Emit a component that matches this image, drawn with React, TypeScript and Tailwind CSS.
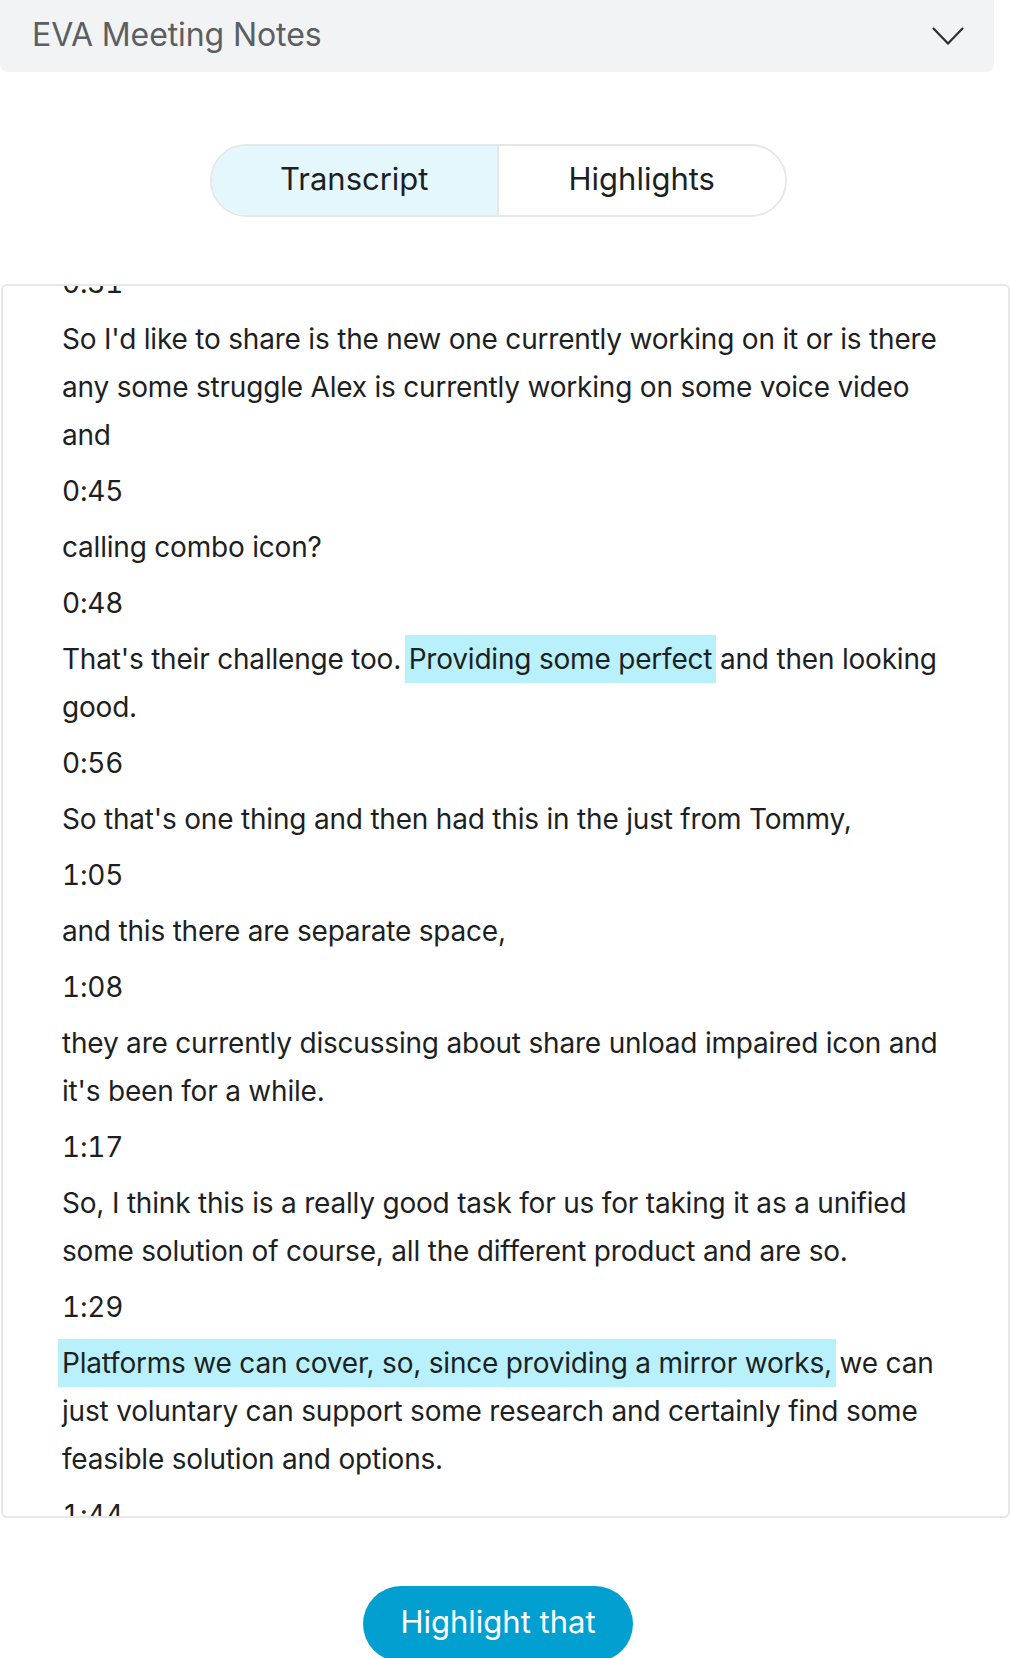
type Part = string | { hl: string }
interface Entry { time: string; text: Part[] }

const entries: Entry[] = [
  { time: "0:31", text: ["So I'd like to share is the new one currently working on it or is there any some struggle Alex is currently working on some voice video and"] },
  { time: "0:45", text: ["calling combo icon?"] },
  { time: "0:48", text: ["That's their challenge too. ", { hl: "Providing some perfect" }, " and then looking good."] },
  { time: "0:56", text: ["So that's one thing and then had this in the just from Tommy,"] },
  { time: "1:05", text: ["and this there are separate space,"] },
  { time: "1:08", text: ["they are currently discussing about share unload impaired icon and it's been for a while."] },
  { time: "1:17", text: ["So, I think this is a really good task for us for taking it as a unified some solution of course, all the different product and are so."] },
  { time: "1:29", text: [{ hl: "Platforms we can cover, so, since providing a mirror works," }, " we can just voluntary can support some research and certainly find some feasible solution and options."] },
  { time: "1:44", text: ["So that's what we want to look at next."] },
]

export default function App() {
  return (
    <div className="w-[1010px] bg-white font-['Inter','Liberation_Sans',sans-serif] text-[#1d1f23]">
      <div className="w-[994px] h-[72px] bg-[#f2f3f5] rounded-b-lg flex items-center justify-between pl-[32px] pr-[30px] pb-[2px]">
        <span className="text-[32px] text-[#5b5e62] tracking-[-0.1px]">EVA Meeting Notes</span>
        <svg width="32" height="18" viewBox="0 0 32 18" fill="none" className="mt-[2px]">
          <polyline points="1,1 16,16.5 31,1" stroke="#2b2d30" strokeWidth="2.2" strokeLinejoin="miter" />
        </svg>
      </div>

      <div className="flex justify-center pt-[72px] pb-[67px] pr-[14px]">
        <div className="flex w-[577px] h-[73px] rounded-full border-2 border-[#e6e7e8] overflow-hidden">
          <button className="flex-1 bg-[#e3f7fc] border-r-2 border-[#e6e7e8] text-[31px] pb-[2px]">Transcript</button>
          <button className="flex-1 bg-white text-[31px] pb-[2px]">Highlights</button>
        </div>
      </div>

      <div className="ml-[1px] h-[1234px] border-2 border-[#e6e7e8] rounded-md overflow-hidden">
        <div className="-mt-[27px] pl-[59px] pr-[60px] flex flex-col gap-2 text-[28px] leading-[48px] tracking-[-0.2px]">
          {entries.map(e => (
            <div key={e.time} className="flex flex-col gap-2">
              <p className="tabular-nums">{e.time}</p>
              <p>
                {e.text.map((p, i) =>
                  typeof p === "string"
                    ? <span key={i}>{p}</span>
                    : <span key={i} className="bg-[#b8f0fc] px-1 -mx-1 py-[7px] box-decoration-clone">{p.hl}</span>
                )}
              </p>
            </div>
          ))}
        </div>
      </div>

      <div className="flex justify-center pt-[68px] pr-[14px]">
        <button className="w-[270px] h-[76px] rounded-full bg-[#02a0d1] text-white text-[31px] pb-[4px]">Highlight that</button>
      </div>
    </div>
  )
}
